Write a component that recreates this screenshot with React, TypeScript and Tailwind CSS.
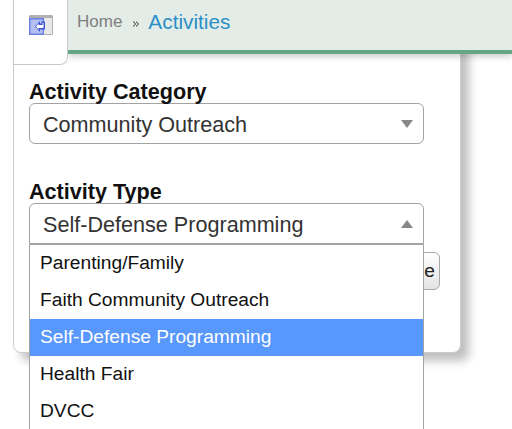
import { ChevronsRight } from "lucide-react"

function BackIcon() {
    return (
        <svg width="24" height="20" viewBox="0 0 24 20">
            <rect x="0" y="0" width="24" height="20" rx="1.5" fill="#b0b0b3" />
            <rect x="0" y="3" width="15" height="17" fill="#6a80e4" />
            <rect x="1.500" y="4.500" width="12" height="14" fill="#b4c0f2" />
            <rect x="15" y="3" width="8" height="16" fill="#e8e8ea" />
            <path d="M16 6.500h-3.500v2h-1.500v-2.500l-5 5.500 5 5.500v-2.500h5z" fill="#3f56d6" />
            <path d="M14.500 8h-1v2h-4v-1.500l-2.500 3 2.500 3v-1.500h5z" fill="#ffffff" />
        </svg>
    )
}

function SelectBox({ label, open }: { label: string; open?: boolean }) {
    return (
        <div
            className={
                "w-[395px] h-[41px] bg-white border border-[#a3a3a3] flex items-center justify-between pl-[13px] pr-[10px] text-[21.6px] text-[#333333] " +
                (open ? "rounded-t-[6px]" : "rounded-[6px]")
            }
        >
            <span className="pt-[3px]">{label}</span>
            {open ? (
                <div className="w-0 h-0 border-x-[6px] border-x-transparent border-b-[8px] border-b-[#888888]" />
            ) : (
                <div className="w-0 h-0 border-x-[6px] border-x-transparent border-t-[8px] border-t-[#888888]" />
            )}
        </div>
    )
}

function Option({ label, active }: { label: string; active?: boolean }) {
    return (
        <div
            className={
                "h-[37px] pl-[10px] flex items-center text-[19.2px] " +
                (active ? "bg-[#5897fb] text-white" : "text-[#111111]")
            }
        >
            {label}
        </div>
    )
}

export default function App() {
    return (
        <div className="relative w-[512px] h-[429px] overflow-hidden bg-white font-['Liberation_Sans',Arial,sans-serif]">
            <div className="relative z-10 ml-[68px] h-[54px] bg-[#e3ece7] border-b-[4px] border-[#66a586] shadow-[0_3px_6px_rgba(0,0,0,0.18)] flex items-center pl-[9px] pb-[6px]">
                <span className="text-[17px] text-[#808080]">Home</span>
                <ChevronsRight className="ml-[9px] mr-[7px] mt-[3px] text-[#555555]" size={10} strokeWidth={2.5} />
                <span className="text-[20.8px] text-[#2b90c8]">Activities</span>
            </div>

            <div className="absolute z-20 left-[13px] top-0 w-[55px] h-[65px] bg-white border-l border-r border-b border-[#c8c8c8] rounded-br-[8px] flex justify-center pt-[15px]">
                <BackIcon />
            </div>

            <div className="absolute left-[13px] top-0 w-[448px] h-[353px] bg-white border border-[#cccccc] rounded-b-[8px] shadow-[8px_8px_10px_rgba(0,0,0,0.25)] pl-[15px] pt-[78px]">
                <div className="h-[24px] text-[21.6px] leading-[26px] font-bold text-[#111111]">Activity Category</div>
                <SelectBox label="Community Outreach" />
                <div className="mt-[36px] text-[21.6px] leading-[24px] font-bold text-[#111111]">Activity Type</div>
            </div>

            <div className="absolute z-10 left-[400px] top-[252px] w-[40px] h-[38px] bg-gradient-to-b from-white to-[#e4e4e4] border border-[#a8a8a8] rounded-[6px] flex items-center justify-end pr-[4px] text-[19.2px] text-[#222222]">
                e
            </div>

            <div className="absolute z-30 left-[29px] top-[203px] w-[396px]">
                <SelectBox label="Self-Defense Programming" open />
                <div className="w-[395px] bg-white border-x border-t border-[#a3a3a3]">
                    <Option label="Parenting/Family" />
                    <Option label="Faith Community Outreach" />
                    <Option label="Self-Defense Programming" active />
                    <Option label="Health Fair" />
                    <Option label="DVCC" />
                </div>
            </div>
        </div>
    )
}
